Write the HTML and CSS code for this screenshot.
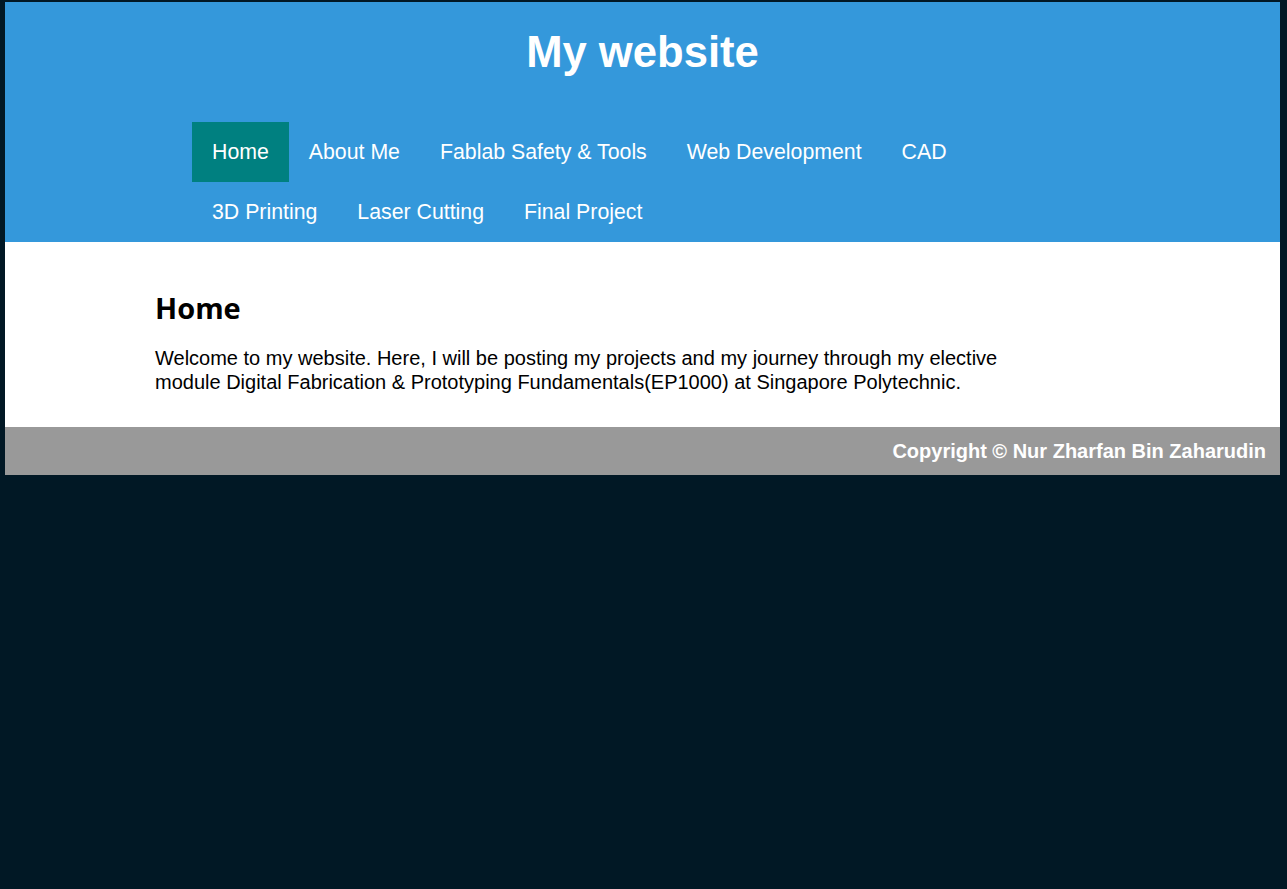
FILE: index.html
```html
<!DOCTYPE html>
<html>
<head>
<meta charset="utf-8">
<title>My website</title>
<link rel="stylesheet" href="styles.css">
</head>
<body>
<div class="page">
  <header class="header">
    <h1 class="title">My website</h1>
    <nav class="nav">
      <a class="nav-item active" href="#">Home</a>
      <a class="nav-item" href="#">About Me</a>
      <a class="nav-item" href="#">Fablab Safety &amp; Tools</a>
      <a class="nav-item" href="#">Web Development</a>
      <a class="nav-item" href="#">CAD</a>
      <a class="nav-item" href="#">3D Printing</a>
      <a class="nav-item" href="#">Laser Cutting</a>
      <a class="nav-item" href="#">Final Project</a>
    </nav>
  </header>
  <main class="main">
    <h2 class="heading">Home</h2>
    <p class="text">Welcome to my website. Here, I will be posting my projects and my journey through my elective module Digital Fabrication &amp; Prototyping Fundamentals(EP1000) at Singapore Polytechnic.</p>
  </main>
  <footer class="footer">Copyright &copy; Nur Zharfan Bin Zaharudin</footer>
</div>
</body>
</html>
```

FILE: styles.css
```css
html, body {
  margin: 0;
  padding: 0;
  background: #011825;
}
body {
  padding: 2px 7px 0 5px;
  font-family: "Liberation Sans", Arial, sans-serif;
}
.page {
  background: #ffffff;
}
.header {
  background: #3498db;
}
.title {
  margin: 0;
  height: 120px;
  box-sizing: border-box;
  padding-top: 24px;
  text-align: center;
  color: #ffffff;
  font-size: 43.6px;
  font-weight: bold;
  line-height: 52px;
}
.nav {
  max-width: 901px;
  margin: 0 auto;
  display: flex;
  flex-wrap: wrap;
}
.nav-item {
  display: block;
  height: 60px;
  line-height: 60px;
  padding: 0 20px;
  color: #ffffff;
  text-decoration: none;
  font-size: 21.3px;
}
.nav-item.active {
  background: #008080;
}
.main {
  padding: 47px 0 33px 150px;
  max-width: 880px;
}
.heading {
  margin: 0 0 19px;
  font-family: "Open Sans", sans-serif;
  font-size: 29px;
  font-weight: bold;
  line-height: 38px;
  color: #000000;
}
.text {
  margin: 0;
  font-size: 20px;
  line-height: 24px;
  color: #000000;
}
.footer {
  background: #999999;
  height: 48px;
  line-height: 48px;
  padding-right: 14px;
  text-align: right;
  color: #ffffff;
  font-weight: bold;
  font-size: 20px;
}
```
